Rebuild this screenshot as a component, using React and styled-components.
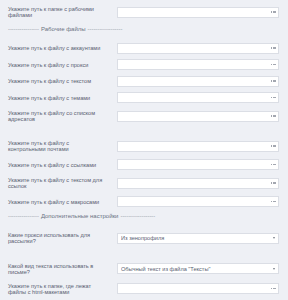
import React from "react";
import styled, { createGlobalStyle } from "styled-components";

const Global = createGlobalStyle`
  html, body { margin: 0; padding: 0; }
  body {
    background: #eef0f5;
    font-family: "Liberation Sans", Arial, sans-serif;
    width: 288px;
    overflow: hidden;
  }
`;

const Page = styled.div`
  display: flex;
  flex-direction: column;
  padding: 3px 9px 0 8px;
`;

const Row = styled.div`
  display: flex;
  align-items: center;
  height: ${(p) => p.$h}px;
  margin-top: ${(p) => p.$mt || 0}px;
`;

const Label = styled.div`
  width: 109px;
  flex: none;
  font-size: 5.6px;
  line-height: 6px;
  color: #586071;
`;

const Field = styled.div`
  flex: 1;
  height: 11px;
  box-sizing: border-box;
  border: 1px solid #dbdee5;
  background: #ffffff;
  display: flex;
  align-items: center;
  padding: 0 2px 0 3px;
`;

const Value = styled.span`
  flex: 1;
  font-size: 5.6px;
  color: #586071;
  white-space: nowrap;
  overflow: hidden;
`;

const Dots = styled.span`
  display: flex;
  gap: 0.6px;
  margin-right: 0.5px;
  & > i {
    width: 1.2px;
    height: 1.2px;
    background: #a3a7b0;
  }
`;

const Arrow = styled.span`
  width: 0;
  height: 0;
  border-left: 1.6px solid transparent;
  border-right: 1.6px solid transparent;
  border-top: 2px solid #767b85;
  margin-right: 1.5px;
`;

const Separator = styled.div`
  display: flex;
  align-items: center;
  gap: 2px;
  height: ${(p) => p.$h}px;
  margin-top: ${(p) => p.$mt || 0}px;
  white-space: nowrap;
`;

const SepTitle = styled.span`
  font-size: 6px;
  color: #6b7282;
`;

const Dashes = styled.span`
  font-size: 5.8px;
  color: #8e94a0;
`;

const FileInput = ({ h, mt, children }) => (
  <Row $h={h} $mt={mt}>
    <Label>{children}</Label>
    <Field>
      <Value />
      <Dots>
        <i />
        <i />
        <i />
      </Dots>
    </Field>
  </Row>
);

const SelectInput = ({ h, mt, value, children }) => (
  <Row $h={h} $mt={mt}>
    <Label>{children}</Label>
    <Field>
      <Value>{value}</Value>
      <Arrow />
    </Field>
  </Row>
);

const LEFT = "----------------";
const RIGHT = "------------------";

const SectionTitle = ({ h, children }) => (
  <Separator $h={h}>
    <Dashes>{LEFT}</Dashes>
    <SepTitle>{children}</SepTitle>
    <Dashes>{RIGHT}</Dashes>
  </Separator>
);

export default function App() {
  return (
    <>
      <Global />
      <Page>
        <FileInput h={18}>
          Укажите путь к папке с рабочими
          <br />
          файлами
        </FileInput>
        <SectionTitle h={16}>Рабочие файлы</SectionTitle>
        <FileInput h={16} mt={3}>Укажите путь к файлу с аккаунтами</FileInput>
        <FileInput h={17}>Укажите путь к файлу с прокси</FileInput>
        <FileInput h={16}>Укажите путь к файлу с текстом</FileInput>
        <FileInput h={17}>Укажите путь к файлу с темами</FileInput>
        <FileInput h={20}>
          Укажите путь к файлу со списком
          <br />
          адресатов
        </FileInput>
        <FileInput h={18} mt={11}>
          Укажите путь к файлу с
          <br />
          контрольными почтами
        </FileInput>
        <FileInput h={19}>Укажите путь к файлу с ссылками</FileInput>
        <FileInput h={18}>
          Укажите путь к файлу с текстом для
          <br />
          ссылок
        </FileInput>
        <FileInput h={19}>Укажите путь к файлу с макросами</FileInput>
        <SectionTitle h={10}>Дополнительные настройки</SectionTitle>
        <SelectInput h={18} mt={8} value="Из зенопрофиля">
          Какие прокси использовать для
          <br />
          рассылки?
        </SelectInput>
        <SelectInput h={19} mt={12} value={"Обычный текст из файла \"Тексты\""}>
          Какой вид текста использовать в
          <br />
          письме?
        </SelectInput>
        <FileInput h={21}>
          Укажите путь к папке, где лежат
          <br />
          файлы с html-макетами
        </FileInput>
      </Page>
    </>
  );
}
